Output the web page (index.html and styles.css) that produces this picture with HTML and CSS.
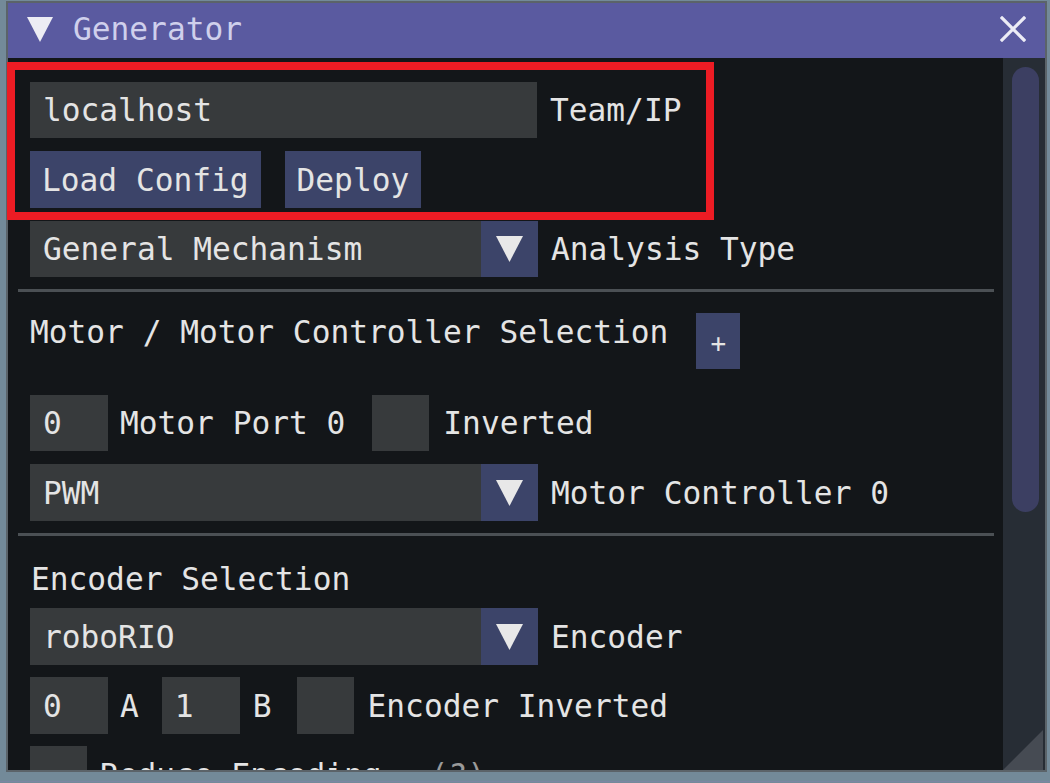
FILE: index.html
```html
<!DOCTYPE html>
<html>
<head>
<meta charset="utf-8">
<title>Generator</title>
<link rel="stylesheet" href="styles.css">
</head>
<body>
<div class="window">
  <div class="titlebar">
    <svg class="collapse" width="26" height="25" viewBox="0 0 26 25"><polygon points="0,0 26,0 13,25" fill="#ececf4"/></svg>
    <span class="title">Generator</span>
    <svg class="close" width="26" height="26" viewBox="0 0 26 26"><path d="M2 2 L24 24 M24 2 L2 24" stroke="#ececf6" stroke-width="3.2" stroke-linecap="square"/></svg>
  </div>
  <div class="body">
    <div class="content">
      <div class="row r1">
        <div class="field wide">localhost</div>
        <span class="label">Team/IP</span>
      </div>
      <div class="row r2">
        <div class="btn">Load Config</div>
        <div class="btn btn-next">Deploy</div>
      </div>
      <div class="row r3">
        <div class="combo"><span class="value">General Mechanism</span><span class="arrow"><svg width="27" height="26" viewBox="0 0 27 26"><polygon points="0,0 27,0 13.5,26" fill="#e8e8e8"/></svg></span></div>
        <span class="label">Analysis Type</span>
      </div>
      <div class="sep sep1"></div>
      <div class="row header">
        <span class="heading">Motor / Motor Controller Selection</span>
        <div class="btn plus">+</div>
      </div>
      <div class="row r5">
        <div class="field int">0</div>
        <span class="label l-int">Motor Port 0</span>
        <div class="check c-motor"></div>
        <span class="label l-check">Inverted</span>
      </div>
      <div class="row r6">
        <div class="combo"><span class="value">PWM</span><span class="arrow"><svg width="27" height="26" viewBox="0 0 27 26"><polygon points="0,0 27,0 13.5,26" fill="#e8e8e8"/></svg></span></div>
        <span class="label">Motor Controller 0</span>
      </div>
      <div class="sep sep2"></div>
      <div class="heading heading2">Encoder Selection</div>
      <div class="row r8">
        <div class="combo"><span class="value">roboRIO</span><span class="arrow"><svg width="27" height="26" viewBox="0 0 27 26"><polygon points="0,0 27,0 13.5,26" fill="#e8e8e8"/></svg></span></div>
        <span class="label">Encoder</span>
      </div>
      <div class="row r9">
        <div class="field int">0</div>
        <span class="label l-int">A</span>
        <div class="field int int-b">1</div>
        <span class="label">B</span>
        <div class="check c-enc"></div>
        <span class="label l-check">Encoder Inverted</span>
      </div>
      <div class="row r10">
        <div class="check"></div>
        <span class="label">Reduce Encoding</span>
        <span class="label help">(?)</span>
      </div>
    </div>
    <div class="scrollbar"><div class="thumb"></div></div>
    <div class="grip"></div>
  </div>
</div>
<div class="next-window"></div>
<div class="annot"></div>
</body>
</html>
```
FILE: styles.css
```css
html, body {
  margin: 0;
  padding: 0;
}
body {
  width: 1050px;
  height: 783px;
  overflow: hidden;
  background: #738a99;
  font-family: "DejaVu Sans Mono", "Liberation Mono", monospace;
  font-size: 31.2px;
  line-height: 36px;
  color: #e4e4e4;
}
.window {
  box-sizing: border-box;
  margin: 1px 0 0 6px;
  width: 1041px;
  height: 771px;
  border: 2px solid #5b6369;
  display: flex;
  flex-direction: column;
  background: #131619;
}
.titlebar {
  height: 55px;
  flex: none;
  background: #5a5aa0;
  display: flex;
  align-items: center;
  padding-left: 19px;
  padding-right: 19px;
}
.collapse {
  margin-bottom: 2px;
}
.title {
  margin-left: 20px;
  margin-bottom: 3px;
  color: #cfd0ec;
}
.close {
  margin-left: auto;
  margin-bottom: 3px;
}
.body {
  flex: 1;
  display: flex;
  position: relative;
  min-height: 0;
}
.content {
  flex: 1;
  overflow: hidden;
  padding: 24px 0 0 22px;
  display: flex;
  flex-direction: column;
}
.row {
  display: flex;
  align-items: center;
  flex: none;
}
.r1 { height: 56px; }
.r2 { height: 57px; margin-top: 13px; }
.r3 { height: 56px; margin-top: 13px; }
.header { height: 56px; margin-top: 21px; align-items: flex-start; }
.r5 { height: 56px; margin-top: 26px; }
.r6 { height: 57px; margin-top: 13px; }
.r8 { height: 57px; margin-top: 11px; }
.r9 { height: 57px; margin-top: 12px; }
.r10 { height: 57px; margin-top: 12px; }

.field {
  box-sizing: border-box;
  height: 100%;
  background: #373a3c;
  padding-left: 13px;
  display: flex;
  align-items: center;
  white-space: pre;
}
.wide { width: 507px; }
.int { width: 78px; }
.int-b { margin-left: 23px; }

.label {
  margin-left: 13px;
  white-space: pre;
}
.l-int { margin-left: 12px; }
.l-check { margin-left: 14px; }
.help {
  margin-left: 48px;
  color: #9a9a9a;
}

.btn {
  box-sizing: border-box;
  height: 100%;
  background: #3c4469;
  padding: 0 12px;
  display: flex;
  align-items: center;
  white-space: pre;
}
.btn-next { margin-left: 24px; }
.plus {
  width: 44px;
  padding: 0;
  justify-content: center;
  margin-left: 28px;
  font-size: 26px;
  padding-top: 4px;
}

.combo {
  width: 508px;
  height: 100%;
  display: flex;
  background: #373a3c;
}
.combo .value {
  flex: 1;
  padding-left: 13px;
  display: flex;
  align-items: center;
  white-space: pre;
}
.combo .arrow {
  width: 57px;
  background: #3c4469;
  display: flex;
  align-items: center;
  justify-content: center;
}

.check {
  width: 57px;
  height: 100%;
  background: #373a3c;
  flex: none;
}
.c-motor { margin-left: 27px; }
.c-enc { margin-left: 25px; }

.heading {
  white-space: pre;
  margin-top: 1px;
}
.heading2 {
  flex: none;
  margin-top: 25px;
  padding-left: 1px;
}

.sep {
  flex: none;
  height: 3px;
  width: 976px;
  margin-left: -12px;
  background: #4b5054;
}
.sep1 { margin-top: 12px; }
.sep2 { margin-top: 12px; }

.scrollbar {
  width: 42px;
  flex: none;
  box-sizing: border-box;
  background: #272d35;
  padding: 9px 6px 0 9px;
}
.thumb {
  height: 445px;
  border-radius: 14px;
  background: #3c3f62;
}
.grip {
  position: absolute;
  right: 2px;
  bottom: 0;
  width: 40px;
  height: 40px;
  background: #464b53;
  clip-path: polygon(100% 0, 100% 100%, 0 100%);
}
.next-window {
  margin-top: 9px;
  height: 1px;
  background: #7b85a3;
}
.annot {
  position: absolute;
  left: 7px;
  top: 62px;
  width: 707px;
  height: 158px;
  box-sizing: border-box;
  border: 8px solid #ed1c24;
}
```
